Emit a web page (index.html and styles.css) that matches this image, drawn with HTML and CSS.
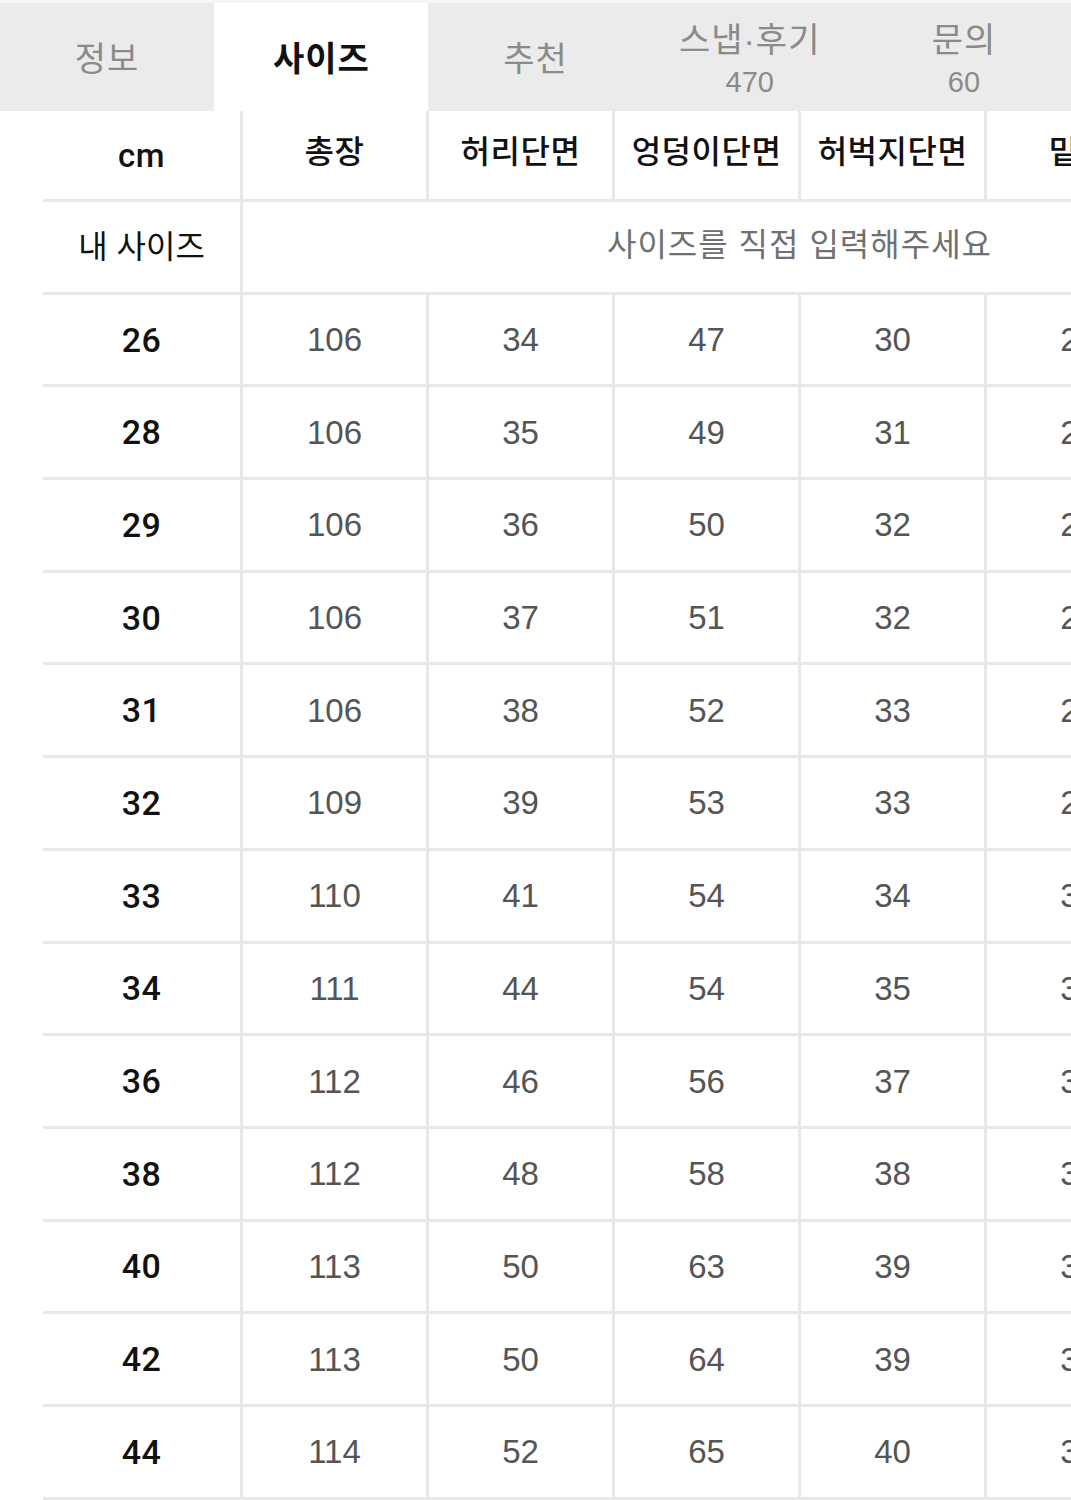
FILE: index.html
```html
<!DOCTYPE html>
<html lang="ko">
<head>
<meta charset="utf-8">
<title>사이즈</title>
<link rel="stylesheet" href="styles.css">
</head>
<body>
<div class="page">
  <nav class="tabs">
    <div class="tab"><span class="tab-label">정보</span></div>
    <div class="tab tab-active"><span class="tab-label">사이즈</span></div>
    <div class="tab"><span class="tab-label">추천</span></div>
    <div class="tab"><span class="tab-label">스냅·후기</span><span class="tab-count">470</span></div>
    <div class="tab"><span class="tab-label">문의</span><span class="tab-count">60</span></div>
  </nav>
  <div class="table-wrap">
    <div class="size-grid">
      <div class="cell head unit">cm</div>
      <div class="cell head">총장</div>
      <div class="cell head">허리단면</div>
      <div class="cell head">엉덩이단면</div>
      <div class="cell head">허벅지단면</div>
      <div class="cell head">밑위</div>
      <div class="cell head">밑단단면</div>

      <div class="cell mine">내 사이즈</div>
      <div class="cell placeholder">사이즈를 직접 입력해주세요</div>

      <div class="cell size">26</div><div class="cell val">106</div><div class="cell val">34</div><div class="cell val">47</div><div class="cell val">30</div><div class="cell val">27</div><div class="cell val">17</div>
      <div class="cell size">28</div><div class="cell val">106</div><div class="cell val">35</div><div class="cell val">49</div><div class="cell val">31</div><div class="cell val">28</div><div class="cell val">18</div>
      <div class="cell size">29</div><div class="cell val">106</div><div class="cell val">36</div><div class="cell val">50</div><div class="cell val">32</div><div class="cell val">28</div><div class="cell val">18</div>
      <div class="cell size">30</div><div class="cell val">106</div><div class="cell val">37</div><div class="cell val">51</div><div class="cell val">32</div><div class="cell val">29</div><div class="cell val">19</div>
      <div class="cell size">31</div><div class="cell val">106</div><div class="cell val">38</div><div class="cell val">52</div><div class="cell val">33</div><div class="cell val">29</div><div class="cell val">19</div>
      <div class="cell size">32</div><div class="cell val">109</div><div class="cell val">39</div><div class="cell val">53</div><div class="cell val">33</div><div class="cell val">29</div><div class="cell val">20</div>
      <div class="cell size">33</div><div class="cell val">110</div><div class="cell val">41</div><div class="cell val">54</div><div class="cell val">34</div><div class="cell val">30</div><div class="cell val">20</div>
      <div class="cell size">34</div><div class="cell val">111</div><div class="cell val">44</div><div class="cell val">54</div><div class="cell val">35</div><div class="cell val">30</div><div class="cell val">21</div>
      <div class="cell size">36</div><div class="cell val">112</div><div class="cell val">46</div><div class="cell val">56</div><div class="cell val">37</div><div class="cell val">31</div><div class="cell val">21</div>
      <div class="cell size">38</div><div class="cell val">112</div><div class="cell val">48</div><div class="cell val">58</div><div class="cell val">38</div><div class="cell val">31</div><div class="cell val">22</div>
      <div class="cell size">40</div><div class="cell val">113</div><div class="cell val">50</div><div class="cell val">63</div><div class="cell val">39</div><div class="cell val">32</div><div class="cell val">22</div>
      <div class="cell size">42</div><div class="cell val">113</div><div class="cell val">50</div><div class="cell val">64</div><div class="cell val">39</div><div class="cell val">32</div><div class="cell val">23</div>
      <div class="cell size">44</div><div class="cell val">114</div><div class="cell val">52</div><div class="cell val">65</div><div class="cell val">40</div><div class="cell val">33</div><div class="cell val">23</div>
    </div>
  </div>
</div>
</body>
</html>
```
FILE: styles.css
```css
html, body {
  margin: 0;
  padding: 0;
  background: #ffffff;
}

body {
  font-family: "Liberation Sans", "Noto Sans CJK KR", sans-serif;
  color: #111111;
}

.page {
  width: 1071px;
  overflow: hidden;
}

.tabs {
  display: flex;
  height: 108px;
  border-top: 3px solid #f6f6f6;
  background: #ebebeb;
}

.tab {
  flex: 1 1 0;
  display: flex;
  flex-direction: column;
  align-items: center;
  justify-content: center;
  color: #8a8a8a;
  padding-top: 4px;
}

.tab-label {
  font-size: 34px;
  line-height: 40px;
  letter-spacing: 1px;
}

.tab-count {
  font-size: 29px;
  line-height: 34px;
  margin-top: 5px;
}

.tab-active {
  background: #ffffff;
  color: #111111;
}

.tab-active .tab-label {
  font-weight: bold;
}

.table-wrap {
  width: 1071px;
  overflow: hidden;
}

.size-grid {
  margin-left: 43px;
  width: 1313px;
  display: grid;
  grid-template-columns: 197px repeat(6, 183px);
  grid-template-rows: 88px;
  grid-auto-rows: 89.7px;
  gap: 3px;
  padding-bottom: 3px;
  background: #e8e8e8;
}

.cell {
  background: #ffffff;
  display: flex;
  align-items: center;
  justify-content: center;
  white-space: nowrap;
  line-height: 1;
}

.head {
  font-size: 32px;
  font-weight: 500;
  color: #111111;
  letter-spacing: 0.5px;
  padding-bottom: 6px;
}

.unit {
  font-family: Roboto, "Liberation Sans", sans-serif;
  font-size: 33px;
  padding-bottom: 0;
}

.mine {
  font-size: 32px;
  color: #111111;
}

.placeholder {
  grid-column: span 6;
  font-size: 32px;
  color: #707070;
  letter-spacing: 1px;
  padding-bottom: 4px;
}

.size {
  font-family: Roboto, "Liberation Sans", sans-serif;
  font-size: 34px;
  font-weight: 500;
  color: #111111;
  letter-spacing: 0.5px;
}

.val {
  font-size: 33px;
  color: #555555;
}
```
